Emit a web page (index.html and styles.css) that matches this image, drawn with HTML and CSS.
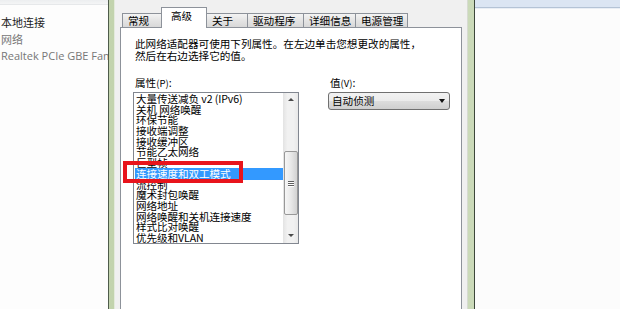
FILE: index.html
```html
<!DOCTYPE html>
<html lang="zh-CN">
<head>
<meta charset="utf-8">
<title>高级</title>
<link rel="stylesheet" href="styles.css">
</head>
<body>
<div class="screen">
  <aside class="left">
    <div class="left-top"></div>
    <ul class="conn">
      <li class="conn-name">本地连接</li>
      <li class="conn-sub">网络</li>
      <li class="conn-sub">Realtek PCIe GBE Family Controller</li>
    </ul>
  </aside>

  <section class="dialog">
    <div class="dlg-body">
      <div class="tabs">
        <div class="tab w40">常规</div>
        <div class="tab sel w45">高级</div>
        <div class="tab w41">关于</div>
        <div class="tab w55">驱动程序</div>
        <div class="tab w52">详细信息</div>
        <div class="tab w52">电源管理</div>
      </div>
      <div class="panel">
        <p class="desc">此网络适配器可使用下列属性。在左边单击您想更改的属性，<br>然后在右边选择它的值。</p>
        <div class="cols">
          <div class="col-left">
            <div class="label">属性<span class="acc">(P)</span>:</div>
            <div class="listbox">
              <ul class="items">
                <li>大量传送减负 v2 (IPv6)</li>
                <li>关机 网络唤醒</li>
                <li>环保节能</li>
                <li>接收端调整</li>
                <li>接收缓冲区</li>
                <li>节能乙太网络</li>
                <li>巨型帧</li>
                <li class="selected">连接速度和双工模式</li>
                <li>流控制</li>
                <li>魔术封包唤醒</li>
                <li>网络地址</li>
                <li>网络唤醒和关机连接速度</li>
                <li>样式比对唤醒</li>
                <li>优先级和VLAN</li>
              </ul>
              <div class="vscroll">
                <div class="arrow up"></div>
                <div class="track-top"></div>
                <div class="thumb"><span></span><span></span><span></span></div>
                <div class="track-bottom"></div>
                <div class="arrow down"></div>
              </div>
            </div>
          </div>
          <div class="col-right">
            <div class="label">值<span class="acc">(V)</span>:</div>
            <div class="combo">
              <span class="combo-text">自动侦测</span>
              <span class="combo-arrow"></span>
            </div>
          </div>
        </div>
      </div>
    </div>
  </section>

  <aside class="right">
    <div class="right-top"></div>
  </aside>

  <div class="highlight-box"></div>
</div>
</body>
</html>
```

FILE: styles.css
```css
* { box-sizing: border-box; }
html, body { margin: 0; padding: 0; }
body {
  width: 620px;
  height: 309px;
  overflow: hidden;
  background: #fcfcfc;
  font-family: "Noto Sans CJK SC", "Noto Sans", sans-serif;
  color: #000;
}
.screen {
  position: relative;
  display: flex;
  width: 620px;
  height: 309px;
  overflow: hidden;
}

/* left pane */
.left {
  width: 108px;
  flex: none;
  background: #fdfdfd;
  overflow: hidden;
}
.left-top {
  height: 5px;
  background: linear-gradient(#eceef0, #f4f5f6);
  border-bottom: 1px solid #e6e8ea;
}
.conn {
  list-style: none;
  margin: 0;
  padding: 10px 0 0 1px;
  white-space: nowrap;
  font-family: "Open Sans", "Noto Sans CJK SC", sans-serif;
  font-size: 11px;
}
.conn li { line-height: 16.5px; height: 16.5px; }
.conn-name { color: #1a1a1a; }
.conn-sub { color: #777; }

/* dialog frame */
.dialog {
  width: 367px;
  flex: none;
  display: flex;
  border-left: 1px solid #4e5c4b;
  border-right: 1px solid #3d473b;
  background: linear-gradient(90deg, #c2d3ad, #cbdab9);
  padding: 0 6px 0 5px;
}
.dlg-body {
  flex: 1;
  display: flex;
  flex-direction: column;
  background: #f0f0f0;
  border-left: 1px solid #e3eadb;
  border-right: 1px solid #d7dbd2;
  padding: 8px 5px 0 5px;
}

/* tabs */
.tabs {
  display: flex;
  align-items: flex-end;
  height: 20px;
  margin: 0 0 -1px 2px;
  font-size: 10.6px;
}
.tab {
  height: 15px;
  line-height: 14px;
  padding-left: 5px;
  border: 1px solid #8d929a;
  border-left-width: 0;
  background: linear-gradient(#f4f4f4, #e4e4e4 50%, #d8d8d8);
  white-space: nowrap;
  overflow: hidden;
}
.tab:first-child { border-left-width: 1px; }
.tab.sel {
  position: relative;
  z-index: 1;
  height: 21px;
  line-height: 16px;
  border-left-width: 1px;
  border-bottom: none;
  margin-left: -1px;
  background: #fff;
  padding-left: 9px;
}
.tab.sel + .tab { border-left-width: 0; }
.w40 { width: 40px; }
.w45 { width: 46px; }
.w41 { width: 41px; }
.w55 { width: 56px; }
.w52 { width: 52px; }

/* panel */
.panel {
  flex: 1;
  background: #fff;
  border: 1px solid #8d929a;
  border-bottom: none;
  padding: 10px 0 0 12px;
  font-size: 10.6px;
}
.desc {
  margin: 0;
  padding-left: 2px;
  line-height: 12px;
  white-space: nowrap;
}
.cols {
  display: flex;
  gap: 29px;
  margin-top: 15px;
}
.label {
  line-height: 12px;
  height: 12px;
  padding-left: 2px;
  margin-bottom: 3px;
}
.acc { font-size: 9.5px; }

.col-left { width: 166px; flex: none; }
.listbox {
  position: relative;
  display: flex;
  height: 152px;
  border: 1px solid #828790;
  background: #fff;
}
.items {
  flex: 1;
  list-style: none;
  margin: 0;
  padding: 1px 0 0 1px;
  overflow: hidden;
}
.items li {
  line-height: 10.7px;
  height: 10.7px;
  padding-left: 1px;
  white-space: nowrap;
  letter-spacing: -0.1px;
}
.items li.selected {
  background: #3399ff;
  color: #fff;
  height: 12.5px;
  line-height: 12.5px;
  margin: -0.9px 0;
}

/* scrollbar */
.vscroll {
  width: 15px;
  flex: none;
  display: flex;
  flex-direction: column;
  align-items: center;
  background: linear-gradient(90deg, #e3e3e3, #f1f1f1 30%, #f1f1f1 70%, #e8e8e8);
}
.arrow {
  width: 0;
  height: 0;
  border-left: 3px solid transparent;
  border-right: 3px solid transparent;
  flex: none;
}
.arrow.up {
  margin-top: 5px;
  border-bottom: 3px solid #4b4b4b;
}
.arrow.down {
  margin-bottom: 6px;
  border-top: 3px solid #4b4b4b;
}
.track-top { height: 50px; flex: none; }
.track-bottom { flex: 1; }
.thumb {
  width: 14px;
  height: 64px;
  flex: none;
  border: 1px solid #989898;
  border-radius: 2px;
  background: linear-gradient(90deg, #f6f6f6, #e8e8e8 50%, #d2d2d2);
  display: flex;
  flex-direction: column;
  align-items: center;
  justify-content: center;
  gap: 1px;
}
.thumb span {
  display: block;
  width: 6px;
  height: 1px;
  background: #5e5e5e;
  box-shadow: 0 1px 0 #fdfdfd;
}

/* combo */
.col-right { width: 122px; flex: none; }
.combo {
  display: flex;
  align-items: center;
  justify-content: space-between;
  height: 18px;
  border: 1px solid #707070;
  border-radius: 3px;
  background: linear-gradient(#f2f2f2, #ebebeb 50%, #dddddd 51%, #cfcfcf);
  padding: 0 4px 0 3px;
}
.combo-text { line-height: 16px; }
.combo-arrow {
  width: 0;
  height: 0;
  border-left: 3.5px solid transparent;
  border-right: 3.5px solid transparent;
  border-top: 4px solid #111;
}

/* right pane */
.right {
  flex: 1;
  background: #fcfcfc;
}
.right-top {
  height: 8px;
  background: #dbe5f3;
  border-bottom: 1px solid #b4c3d6;
  box-shadow: 0 1px 0 #e9eef5;
}

/* red annotation box */
.highlight-box {
  position: absolute;
  left: 123px;
  top: 161px;
  width: 120px;
  height: 22px;
  border: 4px solid #e8141c;
}
```
